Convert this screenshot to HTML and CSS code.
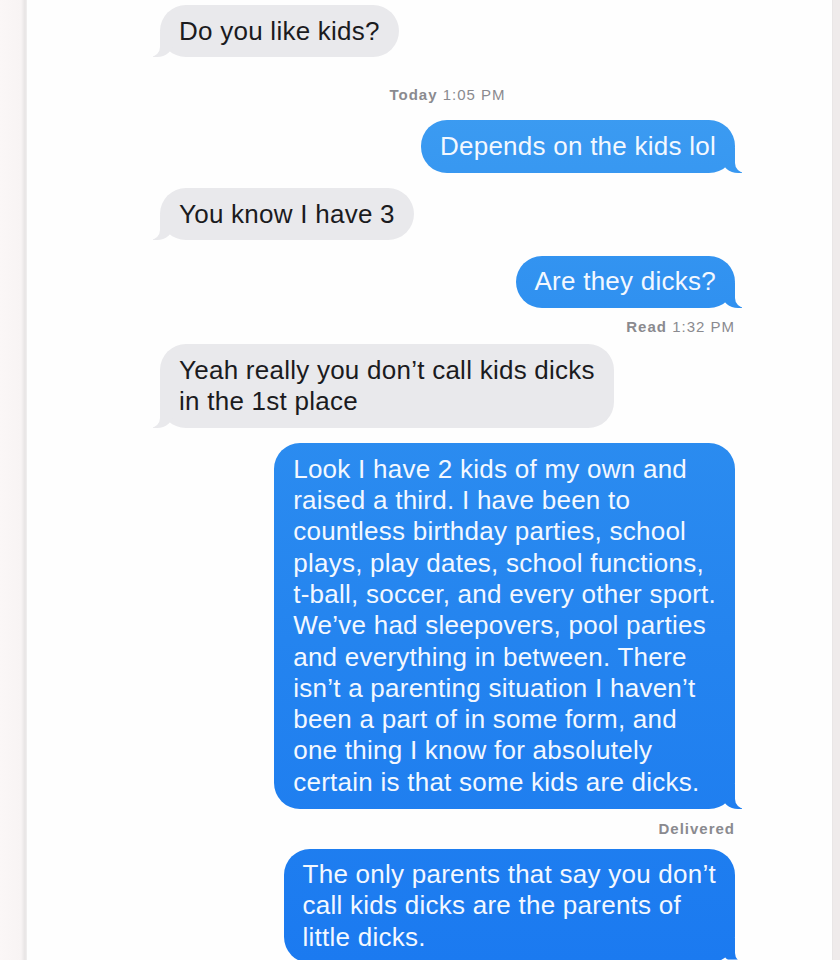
FILE: index.html
```html
<!DOCTYPE html>
<html lang="en">
<head>
<meta charset="utf-8">
<title>Messages</title>
<link rel="stylesheet" href="styles.css">
</head>
<body>
<div class="screen">
  <div class="edge-left"></div>
  <main class="thread">
    <div class="msg recv">Do you like kids?</div>
    <div class="stamp"><b>Today</b> 1:05 PM</div>
    <div class="msg sent">Depends on the kids lol</div>
    <div class="msg recv">You know I have 3</div>
    <div class="msg sent">Are they dicks?</div>
    <div class="status"><b>Read</b> 1:32 PM</div>
    <div class="msg recv">Yeah really you don’t call kids dicks<br>in the 1st place</div>
    <div class="msg sent">Look I have 2 kids of my own and<br>raised a third. I have been to<br>countless birthday parties, school<br>plays, play dates, school functions,<br>t-ball, soccer, and every other sport.<br>We’ve had sleepovers, pool parties<br>and everything in between. There<br>isn’t a parenting situation I haven’t<br>been a part of in some form, and<br>one thing I know for absolutely<br>certain is that some kids are dicks.</div>
    <div class="status delivered"><b>Delivered</b></div>
    <div class="msg sent">The only parents that say you don’t<br>call kids dicks are the parents of<br>little dicks.</div>
  </main>
  <div class="edge-right"></div>
</div>
</body>
</html>
```

FILE: styles.css
```css
* { box-sizing: border-box; }

html, body {
  margin: 0;
  padding: 0;
  background: #ffffff;
}

body {
  width: 840px;
  height: 960px;
  overflow: hidden;
  font-family: "Liberation Sans", Arial, sans-serif;
}

.screen {
  display: grid;
  grid-template-columns: 27px 1fr 8px;
  height: 960px;
}

.edge-left {
  background: linear-gradient(to right, #fbf7f7 0, #f8f4f4 21px, #e7e4e4 25px, #f2f0f0 27px);
}

.edge-right {
  background: #efebeb;
  border-left: 1px solid #e9e6e6;
}

.thread {
  display: flex;
  flex-direction: column;
  padding: 5px 97px 0 133px;
  background: #fefefe;
  overflow: hidden;
}

.msg {
  position: relative;
  padding: 10.5px 19px;
  border-radius: 26px;
  font-size: 26px;
  line-height: 31.3px;
  letter-spacing: 0.25px;
  white-space: nowrap;
}

.msg + .msg { margin-top: 15.5px; }

.recv {
  align-self: flex-start;
  background: #e9e9ec;
  color: #1b1b1e;
}

.sent {
  align-self: flex-end;
  color: #f3f8ff;
}

.sent,
.sent::before {
  background: linear-gradient(to bottom, #42a1f2 0, #2f90f0 320px, #2484ef 640px, #1b7af0 960px) fixed;
}

.msg::before,
.msg::after {
  content: "";
  position: absolute;
  bottom: 0;
  height: 25px;
}

.sent::before {
  right: -7px;
  width: 20px;
  border-bottom-left-radius: 16px 14px;
}

.sent::after {
  right: -26px;
  width: 26px;
  background: #fefefe;
  border-bottom-left-radius: 10px;
}

.recv::before {
  left: -7px;
  width: 20px;
  background: #e9e9ec;
  border-bottom-right-radius: 16px 14px;
}

.recv::after {
  left: -26px;
  width: 26px;
  background: #fefefe;
  border-bottom-right-radius: 10px;
}

.stamp,
.status {
  font-size: 15px;
  line-height: 20px;
  letter-spacing: 1px;
  color: #8a8a8f;
}

.stamp b,
.status b { font-weight: 700; }

.stamp {
  align-self: center;
  margin: 28px 0 15px;
}

.status {
  align-self: flex-end;
  margin: 9px 0 7px;
}

.status.delivered {
  margin: 10px 0 10px;
}
```
